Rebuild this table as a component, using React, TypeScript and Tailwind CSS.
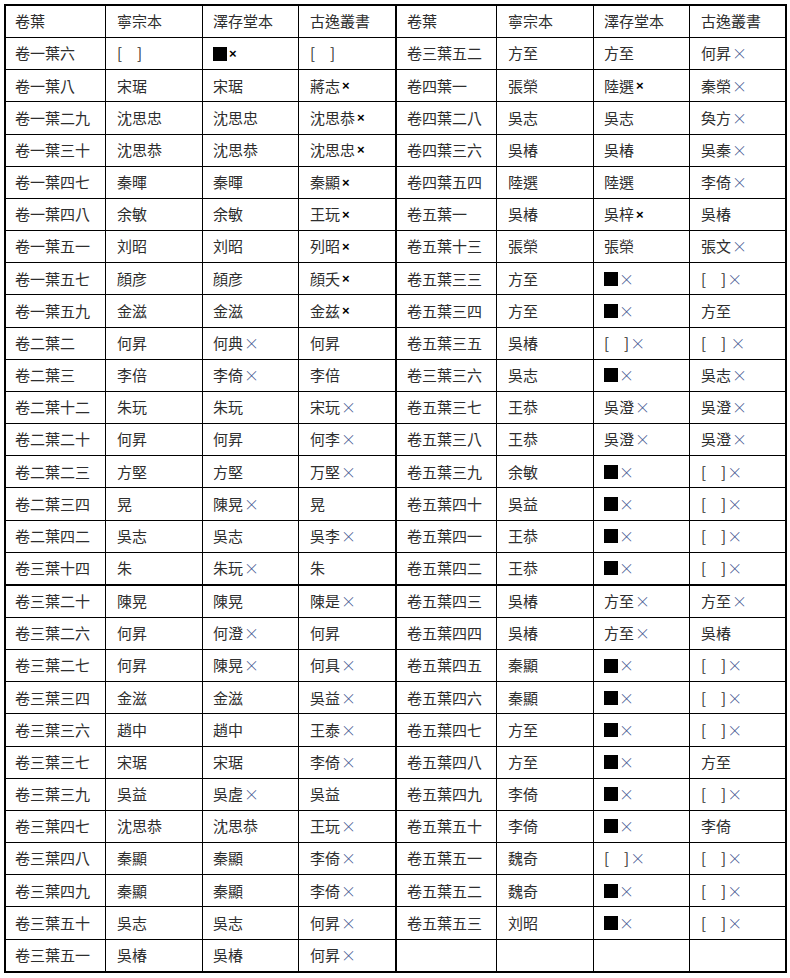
import type { ReactNode } from "react";

// each row: 卷葉, 寧宗本, 澤存堂本, 古逸叢書
// "■" black block, "×" thin cross, "x" small bold cross
const LEFT: string[][] = [
  ["卷一葉六", "[　]", "■x", "[　]"],
  ["卷一葉八", "宋琚", "宋琚", "蔣志x"],
  ["卷一葉二九", "沈思忠", "沈思忠", "沈思恭x"],
  ["卷一葉三十", "沈思恭", "沈思恭", "沈思忠x"],
  ["卷一葉四七", "秦暉", "秦暉", "秦顯x"],
  ["卷一葉四八", "余敏", "余敏", "王玩x"],
  ["卷一葉五一", "刘昭", "刘昭", "列昭x"],
  ["卷一葉五七", "顔彦", "顔彦", "顔夭x"],
  ["卷一葉五九", "金滋", "金滋", "金兹x"],
  ["卷二葉二", "何昇", "何典×", "何昇"],
  ["卷二葉三", "李倍", "李倚×", "李倍"],
  ["卷二葉十二", "朱玩", "朱玩", "宋玩×"],
  ["卷二葉二十", "何昇", "何昇", "何李×"],
  ["卷二葉二三", "方堅", "方堅", "万堅×"],
  ["卷二葉三四", "晃", "陳晃×", "晃"],
  ["卷二葉四二", "吳志", "吳志", "吳李×"],
  ["卷三葉十四", "朱", "朱玩×", "朱"],
  ["卷三葉二十", "陳晃", "陳晃", "陳是×"],
  ["卷三葉二六", "何昇", "何澄×", "何昇"],
  ["卷三葉二七", "何昇", "陳晃×", "何具×"],
  ["卷三葉三四", "金滋", "金滋", "吳益×"],
  ["卷三葉三六", "趙中", "趙中", "王泰×"],
  ["卷三葉三七", "宋琚", "宋琚", "李倚×"],
  ["卷三葉三九", "吳益", "吳虗×", "吳益"],
  ["卷三葉四七", "沈思恭", "沈思恭", "王玩×"],
  ["卷三葉四八", "秦顯", "秦顯", "李倚×"],
  ["卷三葉四九", "秦顯", "秦顯", "李倚×"],
  ["卷三葉五十", "吳志", "吳志", "何昇×"],
  ["卷三葉五一", "吳椿", "吳椿", "何昇×"],
];

const RIGHT: string[][] = [
  ["卷三葉五二", "方至", "方至", "何昇×"],
  ["卷四葉一", "張榮", "陸選x", "秦榮×"],
  ["卷四葉二八", "吳志", "吳志", "奐方×"],
  ["卷四葉三六", "吳椿", "吳椿", "吳秦×"],
  ["卷四葉五四", "陸選", "陸選", "李倚×"],
  ["卷五葉一", "吳椿", "吳梓x", "吳椿"],
  ["卷五葉十三", "張榮", "張榮", "張文×"],
  ["卷五葉三三", "方至", "■×", "[　]×"],
  ["卷五葉三四", "方至", "■×", "方至"],
  ["卷五葉三五", "吳椿", "[　]×", "[　] ×"],
  ["卷三葉三六", "吳志", "■×", "吳志×"],
  ["卷五葉三七", "王恭", "吳澄×", "吳澄×"],
  ["卷五葉三八", "王恭", "吳澄×", "吳澄×"],
  ["卷五葉三九", "余敏", "■×", "[　]×"],
  ["卷五葉四十", "吳益", "■×", "[　]×"],
  ["卷五葉四一", "王恭", "■×", "[　]×"],
  ["卷五葉四二", "王恭", "■×", "[　]×"],
  ["卷五葉四三", "吳椿", "方至×", "方至×"],
  ["卷五葉四四", "吳椿", "方至×", "吳椿"],
  ["卷五葉四五", "秦顯", "■×", "[　]×"],
  ["卷五葉四六", "秦顯", "■×", "[　]×"],
  ["卷五葉四七", "方至", "■×", "[　]×"],
  ["卷五葉四八", "方至", "■×", "方至"],
  ["卷五葉四九", "李倚", "■×", "[　]×"],
  ["卷五葉五十", "李倚", "■×", "李倚"],
  ["卷五葉五一", "魏奇", "[　]×", "[　]×"],
  ["卷五葉五二", "魏奇", "■×", "[　]×"],
  ["卷五葉五三", "刘昭", "■×", "[　]×"],
  ["", "", "", ""],
];

const HEADER = ["卷葉", "寧宗本", "澤存堂本", "古逸叢書"];

const COL_CLASS = [
  "pl-[9px] border-r",
  "pl-[11px] border-r",
  "pl-[10px] border-r",
  "pl-[11px] border-r-2",
  "pl-[10px] border-r",
  "pl-[11px] border-r",
  "pl-[10px] border-r",
  "pl-[11px]",
];

function renderValue(value: string) {
  const out: ReactNode[] = [];
  let buf = "";
  const flush = () => {
    if (buf) {
      out.push(<span key={out.length}>{buf}</span>);
      buf = "";
    }
  };
  for (const ch of value) {
    if (ch === "■") {
      flush();
      out.push(<span key={out.length} className="inline-block h-[14px] w-[14px] bg-black" />);
    } else if (ch === "×") {
      flush();
      out.push(
        <span key={out.length} className="ml-[1px] font-['Noto_Sans_CJK_JP'] font-light text-[#44558f]">
          ×
        </span>
      );
    } else if (ch === "x") {
      flush();
      out.push(
        <span key={out.length} className="ml-[2px] font-['Liberation_Sans'] text-[13px] font-bold text-black">
          ×
        </span>
      );
    } else {
      buf += ch;
    }
  }
  flush();
  return out;
}

export default function App() {
  const rows = [HEADER.concat(HEADER), ...LEFT.map((l, i) => l.concat(RIGHT[i]))];

  return (
    <div className="min-h-screen bg-white pl-[4px] pt-[4px]">
      <div className="grid w-[783px] grid-cols-[100px_97px_96px_98px_100px_97px_96px_95px] border-2 border-black font-['Noto_Sans_CJK_TC',sans-serif] text-[15px] text-[#2e2e2e]">
        {rows.map((row, r) => {
          const rowClass =
            r === rows.length - 1
              ? "h-[31.17px]"
              : r === 17
                ? "h-[33.17px] border-b-2"
                : "h-[32.17px] border-b";
          return row.map((value, c) => (
            <div
              key={`${r}-${c}`}
              className={`flex items-center whitespace-pre border-black ${rowClass} ${COL_CLASS[c]}`}
            >
              {renderValue(value)}
            </div>
          ));
        })}
      </div>
    </div>
  );
}
